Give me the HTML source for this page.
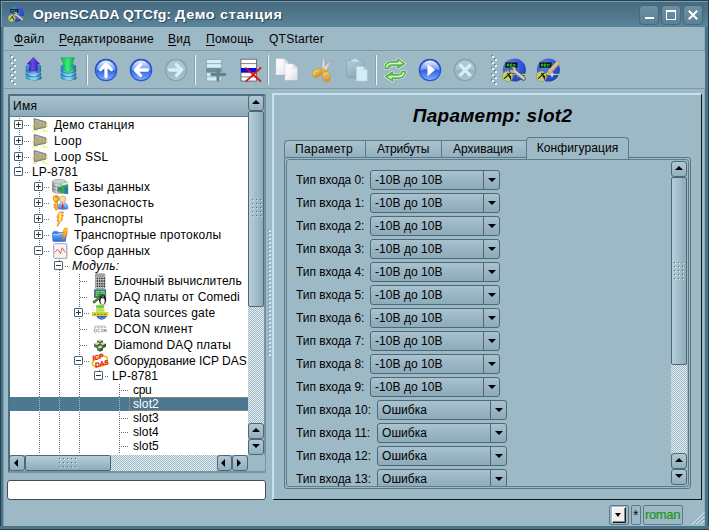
<!DOCTYPE html>
<html><head><meta charset="utf-8">
<style>
*{box-sizing:border-box;margin:0;padding:0}
html,body{width:709px;height:530px;overflow:hidden;background:#9eb9c6;font-family:"Liberation Sans",sans-serif;font-size:12px;color:#000}
.a{position:absolute}
#win{position:absolute;left:0;top:0;width:709px;height:530px;background:#9eb9c6;overflow:hidden}
/* window frame */
#frameL{left:0;top:27px;width:4px;height:503px;background:#4c7489;border-left:1px solid #24404f;border-right:1px solid #7a9eb1}
#frameR{left:704px;top:27px;width:5px;height:503px;background:#4c7489;border-right:1px solid #24404f;border-left:1px solid #88aabb}
#frameB{left:0;top:526px;width:709px;height:4px;background:#4c7489;border-bottom:1px solid #24404f}
#title{left:0;top:0;width:709px;height:27px;background:linear-gradient(#47697d 0,#4e748a 45%,#5b859c 100%);border-top:1px solid #24404f;border-left:1px solid #24404f;border-right:1px solid #24404f;box-shadow:inset 1px 1px 0 #789cb0}
#ttext{left:33px;top:7px;font-weight:bold;font-size:13.3px;color:#fff;white-space:nowrap;text-shadow:1px 1px 1px #2a4656}
.wbtn{top:5px;width:20px;height:20px;border-radius:4px;background:linear-gradient(#6d90a4,#5b8096);border:1px solid #44687c}
/* menu */
#menu{left:5px;top:27px;width:699px;height:23px;background:#9eb9c6}
.mi{top:32px;font-size:12px;white-space:nowrap;letter-spacing:.25px}
.mi u{text-decoration:underline;text-underline-offset:2px}
#tbar{left:4px;top:50px;width:701px;height:39px;border-top:1px solid #7d99a7;border-bottom:1px solid #7d99a7;background:#9eb9c6}
.tsep{top:55px;width:2px;height:30px;border-left:1px solid #86a2b0;border-right:1px solid #eef6fa}
/* tree */
#tree{left:8px;top:94px;width:258px;height:379px;border:2px solid;border-color:#4b7188 #7194a8 #7194a8 #4b7188;border-radius:2px;background:#fff;overflow:hidden}
#thead{left:0;top:0;width:238px;height:21px;background:linear-gradient(#a8c2ce,#9bb7c5 50%,#8daab8);border-bottom:1px solid #5f7b8a;font-size:12px;letter-spacing:.3px;padding:3px 0 0 3px}
.tr{left:0;width:239px;white-space:nowrap;font-size:12px}
.tx{position:absolute;top:50%;transform:translateY(-50%);letter-spacing:.3px}
.sel{background:#4c7991;color:#fff}
#ledit{left:7px;top:480px;width:259px;height:20px;border:1px solid #3d505c;border-radius:3px;background:#fff}
/* right panel */
#panel{left:272px;top:93px;width:430px;height:407px;border-top:2px solid #c6e1f0;border-left:2px solid #c6e1f0;border-right:1px solid #0e161c;border-bottom:1px solid #0e161c}
#ptitle{left:284px;top:104.5px;width:417px;letter-spacing:.27px;text-align:center;font-size:19px;font-weight:bold;font-style:italic}
.tab{top:140px;height:18px;border:1px solid #5f7b8a;border-bottom:none;border-radius:4px 4px 0 0;background:linear-gradient(#a9c2ce,#93afbd);font-size:12px;text-align:center;padding-top:1px;letter-spacing:.2px}
#pane{left:284px;top:157px;width:407px;height:332px;border:1px solid #587684;border-radius:3px}
.lbl{left:296px;font-size:12px;white-space:nowrap;letter-spacing:-.05px}
.cb{height:20px;width:130px;border:1px solid #4d6878;border-radius:3px;background:linear-gradient(#a9c3cf,#9ab5c3 50%,#8dabb9);font-size:12px;padding:2px 0 0 4px;letter-spacing:.05px;white-space:nowrap}
.cb i{position:absolute;right:15px;top:0;width:1px;height:18px;background:#4d6878}
.cb b{position:absolute;right:3px;top:7px;width:0;height:0;border:4px solid transparent;border-top:4px solid #000;border-bottom:none}
/* scrollbars */
.sb{background:#c9d8e0;background-image:conic-gradient(#9eb9c6 25%,#e6eef2 0 50%,#9eb9c6 0 75%,#e6eef2 0);background-size:2px 2px}
.sbtn{border:1px solid #4d6878;border-radius:3px;background:linear-gradient(#b0c8d3,#93afbd)}

.vl{width:1px;background-image:linear-gradient(#5f6f7c 50%,transparent 0);background-size:1px 2px}
.vl.f{background-position:0 1px}
.vl.w{background-image:linear-gradient(#a3bfce 50%,transparent 0)}
.hl.w{background-image:linear-gradient(90deg,#a3bfce 50%,transparent 0)}
.hl{height:1px;background-image:linear-gradient(90deg,#5f6f7c 50%,transparent 0);background-size:2px 1px}
.hl.f{background-position:1px 0}
.bx{width:9px;height:9px;border:1px solid #4c6272;border-radius:1px;background:#fff}
.bx:before{content:"";position:absolute;left:1px;top:3px;width:5px;height:1px;background:#2c3a46}
.bx s{position:absolute;left:3px;top:1px;width:1px;height:5px;background:#2c3a46}
.tt{white-space:nowrap;font-size:12px;letter-spacing:.1px}
.it{font-style:italic}
.gd2{width:2px;height:2px;background:#d9e9f1;box-shadow:-1px -1px 0 #86a2b0}
.gd{width:1px;height:1px;background:#54707e;box-shadow:1px 1px 0 #d4e6ee}
.ws{color:#fff}
.arr{position:absolute;width:0;height:0;border:4px solid transparent}
.au{border-bottom:4px solid #000;border-top:none}
.ad{border-top:4px solid #000;border-bottom:none}
.al{border-right:4px solid #000;border-left:none}
.ar{border-left:4px solid #000;border-right:none}
.sl{border:1px solid #4d6878;border-radius:2px}
.slv{background:linear-gradient(90deg,#b7cfda,#a3bdca 50%,#8eabb9)}
.slh{background:linear-gradient(#b7cfda,#a3bdca 50%,#8eabb9)}
.st{top:505px;height:20px;border:1px solid #5e7a88;border-radius:2px;font-size:13px}
/* status */
#status{left:5px;top:500px;width:699px;height:25px}
</style></head><body>
<div id="win">
<div id="title" class="a"></div>
<div id="ttext" class="a"><span id="t1" style="position:absolute;left:0;top:0;transform-origin:0 50%;transform:scaleX(1.052);letter-spacing:.12px">OpenSCADA QTCfg:</span><span id="t2" style="position:absolute;left:141.5px;top:0;transform-origin:0 50%;transform:scaleX(1.088);letter-spacing:.6px">Демо станция</span></div>
<div class="a wbtn" style="left:639px"><i class="a" style="left:5px;top:11px;width:9px;height:2px;background:#fff"></i></div>
<div class="a wbtn" style="left:661px"><i class="a" style="left:4px;top:4px;width:10px;height:10px;border:1px solid #fff;border-top-width:2px"></i></div>
<div class="a wbtn" style="left:683px"><svg class="a" style="left:0;top:0" width="19" height="19" viewBox="0 0 19 19"><path d="M4.8 4.8L13.2 13.2M13.2 4.8L4.8 13.2" stroke="#fff" stroke-width="2" fill="none"/></svg></div>
<div class="a" style="left:8px;top:6px;width:16px;height:16px"><svg width="16" height="16" viewBox="0 0 24 24" style="display:block;overflow:visible"><defs><radialGradient id="tb" cx=".35" cy=".3" r=".8"><stop offset="0" stop-color="#6a8cf0"/><stop offset=".55" stop-color="#3058d8"/><stop offset="1" stop-color="#1c3cb8"/></radialGradient></defs>
<circle cx="12.4" cy="12" r="11.5" fill="url(#tb)"/>
<rect x="3.6" y="4.6" width="11.8" height="5" fill="#0a1408" stroke="#1c2c1c" stroke-width=".4"/>
<path d="M5.4 6V8.4M6.8 6V8.4M5.4 6H6.8M5.4 7.2H6.8M8.4 6H9.8V8.4H8.4ZM11 6.2L12.6 7.2L11 8.4M13 6V8.4" stroke="#2ee62e" stroke-width=".8" fill="none"/>
<path d="M9 16.4H23.4" stroke="#e8e020" stroke-width="1"/>
<path d="M13 16.4L15 15.2L16 12.6L17 15.4L19 16.4L17 17.4L16 20L15 17.6Z" fill="#dfe8f4" opacity=".9"/>
<circle cx="5.6" cy="18.2" r="5.3" fill="#c4cf6a" stroke="#8a9430" stroke-width=".6"/>
<path d="M2.2 20.6L8.6 14.6M5.2 15.2L9.2 19.4M6.8 17.6 L9 21.6" stroke="#151515" stroke-width="1.1" fill="none"/>
<g><path d="M12.4 13.2L21.6 20.4" stroke="#4c4c4c" stroke-width="4.4" stroke-linecap="round"/><circle cx="10.9" cy="11.9" r="3.7" fill="#4c4c4c"/>
<path d="M12.4 13.2L21.6 20.4" stroke="#b9b9b9" stroke-width="3" stroke-linecap="round"/><circle cx="10.9" cy="11.9" r="3" fill="#b9b9b9"/>
<path d="M13 13L21.8 19.8" stroke="#e6e6e6" stroke-width=".9" stroke-linecap="round"/>
<path d="M10.9 12.2L7.2 11.2L9.6 8.2Z" fill="#3b63da" stroke="#4c4c4c" stroke-width=".5"/></g></svg></div>
<div id="frameL" class="a"></div><div id="frameR" class="a"></div><div id="frameB" class="a"></div>

<div id="menu" class="a"></div>
<div class="a mi" style="left:14px"><u>Ф</u>айл</div>
<div class="a mi" style="left:59px"><u>Р</u>едактирование</div>
<div class="a mi" style="left:168px"><u>В</u>ид</div>
<div class="a mi" style="left:206px"><u>П</u>омощь</div>
<div class="a mi" style="left:269px">QTStarter</div>
<div id="tbar" class="a"></div>
<div class="a tsep" style="left:86px"></div>
<div class="a tsep" style="left:194px"></div>
<div class="a tsep" style="left:267px"></div>
<div class="a tsep" style="left:375px"></div>
<div class="a" style="left:21px;top:58px;width:24px;height:24px"><svg width="24" height="24" viewBox="0 0 24 24" style="display:block;overflow:visible"><defs><linearGradient id="lc" x1="0" x2="1"><stop offset="0" stop-color="#1d74b4"/><stop offset=".35" stop-color="#6cc6f0"/><stop offset=".6" stop-color="#8bd8f8"/><stop offset="1" stop-color="#1a5f96"/></linearGradient>
<linearGradient id="lt" x1="0" x2="1"><stop offset="0" stop-color="#3a94cc"/><stop offset=".5" stop-color="#55b0e0"/><stop offset="1" stop-color="#2a78b0"/></linearGradient></defs>
<ellipse cx="13.6" cy="20" rx="7.6" ry="2.6" fill="#27414f" opacity=".55"/>
<path d="M4.8 8.5 V19.6 A7.6 2.6 0 0 0 20 19.6 V8.5 Z" fill="url(#lc)"/>
<path d="M4.8 12.6 A7.6 2.6 0 0 0 20 12.6" fill="none" stroke="#1b67a3" stroke-width=".9" opacity=".9"/>
<path d="M4.8 16.4 A7.6 2.6 0 0 0 20 16.4" fill="none" stroke="#1b67a3" stroke-width=".9" opacity=".9"/>
<path d="M4.8 13.5 A7.6 2.6 0 0 0 20 13.5" fill="none" stroke="#b5eaff" stroke-width=".7" opacity=".7"/>
<path d="M4.8 17.3 A7.6 2.6 0 0 0 20 17.3" fill="none" stroke="#b5eaff" stroke-width=".7" opacity=".7"/>
<ellipse cx="12.4" cy="8.5" rx="7.6" ry="2.6" fill="url(#lt)" stroke="#2a7ab5" stroke-width=".5"/><defs><linearGradient id="lp" x1="0" x2="1"><stop offset="0" stop-color="#3d14b8"/><stop offset=".45" stop-color="#6a48e8"/><stop offset="1" stop-color="#3a10b0"/></linearGradient></defs>
<path d="M12.4 -0.6 L18.6 5.9 L16 5.9 L16.6 13.2 L7.8 13.2 L9 5.9 L6.2 5.9 Z" fill="url(#lp)" stroke="#3a12a8" stroke-width=".5" stroke-linejoin="round"/></svg></div>
<div class="a" style="left:56px;top:58px;width:24px;height:24px"><svg width="24" height="24" viewBox="0 0 24 24" style="display:block;overflow:visible"><defs><linearGradient id="sc" x1="0" x2="1"><stop offset="0" stop-color="#1d74b4"/><stop offset=".35" stop-color="#6cc6f0"/><stop offset=".6" stop-color="#8bd8f8"/><stop offset="1" stop-color="#1a5f96"/></linearGradient>
<linearGradient id="st" x1="0" x2="1"><stop offset="0" stop-color="#3a94cc"/><stop offset=".5" stop-color="#55b0e0"/><stop offset="1" stop-color="#2a78b0"/></linearGradient></defs>
<ellipse cx="13.6" cy="20" rx="7.6" ry="2.6" fill="#27414f" opacity=".55"/>
<path d="M4.8 8.5 V19.6 A7.6 2.6 0 0 0 20 19.6 V8.5 Z" fill="url(#sc)"/>
<path d="M4.8 12.6 A7.6 2.6 0 0 0 20 12.6" fill="none" stroke="#1b67a3" stroke-width=".9" opacity=".9"/>
<path d="M4.8 16.4 A7.6 2.6 0 0 0 20 16.4" fill="none" stroke="#1b67a3" stroke-width=".9" opacity=".9"/>
<path d="M4.8 13.5 A7.6 2.6 0 0 0 20 13.5" fill="none" stroke="#b5eaff" stroke-width=".7" opacity=".7"/>
<path d="M4.8 17.3 A7.6 2.6 0 0 0 20 17.3" fill="none" stroke="#b5eaff" stroke-width=".7" opacity=".7"/>
<ellipse cx="12.4" cy="8.5" rx="7.6" ry="2.6" fill="url(#st)" stroke="#2a7ab5" stroke-width=".5"/><defs><linearGradient id="sg" x1="0" x2="1"><stop offset="0" stop-color="#10b850"/><stop offset=".5" stop-color="#38ec80"/><stop offset="1" stop-color="#0ea848"/></linearGradient></defs>
<path d="M5 -0.2 L18.3 -0.2 L15.4 8.2 L18.4 8.2 L12.3 16.2 L6 8.2 L8.6 8.2 Z" fill="url(#sg)" stroke="#0c9a40" stroke-width=".5" stroke-linejoin="round"/></svg></div>
<div class="a" style="left:94px;top:58px;width:24px;height:24px"><svg width="24" height="24" viewBox="0 0 24 24" style="display:block;overflow:visible"><defs><linearGradient id="ub" x1="0" y1="0" x2="0" y2="1"><stop offset="0" stop-color="#2f62e2"/><stop offset=".5" stop-color="#2a5ee4"/><stop offset="1" stop-color="#86b2ff"/></linearGradient>
<linearGradient id="ug" x1="0" y1="0" x2="0" y2="1"><stop offset="0" stop-color="#fff" stop-opacity=".92"/><stop offset="1" stop-color="#fff" stop-opacity=".28"/></linearGradient></defs>
<circle cx="12" cy="12" r="10.7" fill="url(#ub)" stroke="#2452cc" stroke-width="1.1"/>
<path d="M2.4 12.4 A9.6 9.8 0 0 1 21.6 12.4 Q17 11 12 11.2 Q7 11 2.4 12.4Z" fill="url(#ug)"/><path d="M12 18.5V6.5M6.6 11.6L12 6.2L17.4 11.6" fill="none" stroke="#fff" stroke-width="3.3" stroke-linecap="round" stroke-linejoin="round"/></svg></div>
<div class="a" style="left:129px;top:58px;width:24px;height:24px"><svg width="24" height="24" viewBox="0 0 24 24" style="display:block;overflow:visible"><defs><linearGradient id="kb" x1="0" y1="0" x2="0" y2="1"><stop offset="0" stop-color="#2f62e2"/><stop offset=".5" stop-color="#2a5ee4"/><stop offset="1" stop-color="#86b2ff"/></linearGradient>
<linearGradient id="kg" x1="0" y1="0" x2="0" y2="1"><stop offset="0" stop-color="#fff" stop-opacity=".92"/><stop offset="1" stop-color="#fff" stop-opacity=".28"/></linearGradient></defs>
<circle cx="12" cy="12" r="10.7" fill="url(#kb)" stroke="#2452cc" stroke-width="1.1"/>
<path d="M2.4 12.4 A9.6 9.8 0 0 1 21.6 12.4 Q17 11 12 11.2 Q7 11 2.4 12.4Z" fill="url(#kg)"/><path d="M18.5 12H6.5M11.6 6.6L6.2 12L11.6 17.4" fill="none" stroke="#fff" stroke-width="3.3" stroke-linecap="round" stroke-linejoin="round"/></svg></div>
<div class="a" style="left:164px;top:58px;width:24px;height:24px"><svg width="24" height="24" viewBox="0 0 24 24" style="display:block;overflow:visible"><defs><linearGradient id="fb" x1="0" y1="0" x2="0" y2="1"><stop offset="0" stop-color="#9db5c1"/><stop offset=".5" stop-color="#98b0bd"/><stop offset="1" stop-color="#b0c6d1"/></linearGradient></defs>
<circle cx="12" cy="12" r="10.7" fill="url(#fb)" stroke="#849fad" stroke-width="1.1"/>
<path d="M2.4 12.4 A9.6 9.8 0 0 1 21.6 12.4 Q17 11 12 11.2 Q7 11 2.4 12.4Z" fill="#cfe0e8" opacity=".45"/><path d="M5.5 12H17.5M12.4 6.6L17.8 12L12.4 17.4" fill="none" stroke="#d6f0fb" stroke-width="3.3" stroke-linecap="round" stroke-linejoin="round"/></svg></div>
<div class="a" style="left:202px;top:58px;width:24px;height:24px"><svg width="24" height="24" viewBox="0 0 24 24" style="display:block;overflow:visible"><rect x="4.4" y="1.4" width="15" height="21.6" fill="#d3ecf7" stroke="#8eaab8" stroke-width=".9"/>
<path d="M4.4 5.6H19.4M4.4 14.6H19.4M4.4 18.8H19.4" stroke="#8eaab8" stroke-width=".9"/>
<rect x="4.4" y="9.8" width="15" height="4.6" fill="#6e8d9b"/>
<path d="M8.6 16.5H24M16 11.4V23.2" stroke="#64838f" stroke-width="3" fill="none"/></svg></div>
<div class="a" style="left:238px;top:58px;width:24px;height:24px"><svg width="24" height="24" viewBox="0 0 24 24" style="display:block;overflow:visible"><rect x="3" y="1.2" width="15.4" height="21.8" fill="#fff" stroke="#4a4a4a" stroke-width=".7"/>
<path d="M3 5.6H18.4M3 14.6H18.4M3 18.9H18.4" stroke="#4a4a4a" stroke-width=".7"/>
<rect x="3" y="10" width="15.4" height="4.4" fill="#0a0ae6"/>
<path d="M8 10.2L22.4 23M22.6 10L8.2 23.2" stroke="#e01010" stroke-width="1.8" fill="none" stroke-linecap="round"/></svg></div>
<div class="a" style="left:275px;top:58px;width:24px;height:24px"><svg width="24" height="24" viewBox="0 0 24 24" style="display:block;overflow:visible"><defs><linearGradient id="cpg" x1="0" y1="0" x2="1" y2="1"><stop offset="0" stop-color="#ffffff"/><stop offset=".5" stop-color="#f4f4f8"/><stop offset="1" stop-color="#d8d9e2"/></linearGradient></defs>
<path d="M1 .8H9.4L13.4 4.8V17H1Z" fill="#5f7886" opacity=".3" transform="translate(.7 .8)"/>
<path d="M1 .8H9.4L13.4 4.8V17H1Z" fill="url(#cpg)" stroke="#d0d4dc" stroke-width=".4"/>
<path d="M9.4 .8V4.8H13.4Z" fill="#e4e5ec" stroke="#b8bcc6" stroke-width=".4"/>
<path d="M10 6H18.4L22.5 10V22.3H10Z" fill="#5f7886" opacity=".3" transform="translate(.7 .8)"/>
<path d="M10 6H18.4L22.5 10V22.3H10Z" fill="url(#cpg)" stroke="#d0d4dc" stroke-width=".4"/>
<path d="M18.4 6V10H22.5Z" fill="#e4e5ec" stroke="#b8bcc6" stroke-width=".4"/></svg></div>
<div class="a" style="left:310px;top:58px;width:24px;height:24px"><svg width="24" height="24" viewBox="0 0 24 24" style="display:block;overflow:visible"><defs><linearGradient id="ctb" x1="0" x2="1"><stop offset="0" stop-color="#ffffff"/><stop offset="1" stop-color="#a4acb6"/></linearGradient>
<linearGradient id="cth" x1="0" y1="0" x2="0" y2="1"><stop offset="0" stop-color="#ffd42c"/><stop offset="1" stop-color="#f08c10"/></linearGradient></defs>
<path d="M12.6 0.2 L14.6 0.6 L16 11.4 L12.2 12.6 Z" fill="url(#ctb)" stroke="#9098a4" stroke-width=".5"/>
<path d="M22.2 3.4 L20.6 2 L12.2 11.4 L15.2 13.8 Z" fill="url(#ctb)" stroke="#9098a4" stroke-width=".5"/>
<ellipse cx="6.9" cy="15.2" rx="3.6" ry="2.4" fill="none" stroke="url(#cth)" stroke-width="2.4" transform="rotate(-32 6.9 15.2)"/>
<ellipse cx="16.3" cy="18.6" rx="2.5" ry="4" fill="none" stroke="url(#cth)" stroke-width="2.4" transform="rotate(-14 16.3 18.6)"/>
<path d="M10 12.6 L13.4 11.4 L15.4 13 L15.4 14.6" fill="none" stroke="#f4a818" stroke-width="2.4" stroke-linejoin="round"/>
<ellipse cx="6.9" cy="15.2" rx="5" ry="3.8" fill="none" stroke="#d87c0c" stroke-width=".4" transform="rotate(-32 6.9 15.2)"/>
<ellipse cx="16.3" cy="18.6" rx="3.9" ry="5.4" fill="none" stroke="#d87c0c" stroke-width=".4" transform="rotate(-14 16.3 18.6)"/></svg></div>
<div class="a" style="left:345px;top:58px;width:24px;height:24px"><svg width="24" height="24" viewBox="0 0 24 24" style="display:block;overflow:visible"><defs><linearGradient id="psg" x1="0" y1="0" x2=".6" y2="1"><stop offset="0" stop-color="#b6d2de"/><stop offset="1" stop-color="#86a4b2"/></linearGradient></defs>
<rect x="1.8" y="2.6" width="17.4" height="17.2" rx="1.8" fill="url(#psg)" stroke="#819eac" stroke-width=".6"/>
<path d="M5.4 4.6 V3 Q5.6 2 7 1.8 Q7.6 0.2 10 0.2 Q12.4 0.2 13 1.8 Q14.4 2 14.6 3 V4.6Z" fill="#c2dce8" stroke="#8aa8b6" stroke-width=".5"/>
<path d="M11.4 8.4H18.4L22.2 12.2V23H11.4Z" fill="#d2ecf8" stroke="#b4d2e0" stroke-width=".5"/>
<path d="M18.4 8.4V12.2H22.2Z" fill="#b8d6e4"/></svg></div>
<div class="a" style="left:383px;top:58px;width:24px;height:24px"><svg width="24" height="24" viewBox="0 0 24 24" style="display:block;overflow:visible"><g fill="#58bd48" stroke="#f4fff0" stroke-width="1.8" stroke-linejoin="round" paint-order="stroke">
<path d="M1.6 10.6 Q1.6 3.4 9 3.6 L14.6 3.6 L14.6 0.6 L22 5.6 L14.6 10.4 L14.6 7.6 L9.4 7.6 Q6 7.6 5.6 11 Z"/>
<path d="M22.6 13.2 Q22.6 20.4 15.2 20.4 L9.6 20.4 L9.6 23.4 L2.2 18.4 L9.6 13.6 L9.6 16.4 L14.8 16.4 Q18.2 16.4 18.6 13.2 Z"/></g>
<g fill="none" stroke="#2c8428" stroke-width=".6" stroke-linejoin="round">
<path d="M1.6 10.6 Q1.6 3.4 9 3.6 L14.6 3.6 L14.6 0.6 L22 5.6 L14.6 10.4 L14.6 7.6 L9.4 7.6 Q6 7.6 5.6 11 Z"/>
<path d="M22.6 13.2 Q22.6 20.4 15.2 20.4 L9.6 20.4 L9.6 23.4 L2.2 18.4 L9.6 13.6 L9.6 16.4 L14.8 16.4 Q18.2 16.4 18.6 13.2 Z"/></g>
<path d="M3.6 9.6 Q4 5.6 9 5.6 L16.4 5.6 L16.4 4 L19 5.6" fill="none" stroke="#d8f8cc" stroke-width="1.5"/>
<path d="M20.6 14.4 Q20.2 18.4 15.2 18.4 L7.8 18.4 L7.8 20 L5.2 18.4" fill="none" stroke="#d8f8cc" stroke-width="1.5"/></svg></div>
<div class="a" style="left:418px;top:58px;width:24px;height:24px"><svg width="24" height="24" viewBox="0 0 24 24" style="display:block;overflow:visible"><defs><linearGradient id="pb" x1="0" y1="0" x2="0" y2="1"><stop offset="0" stop-color="#2f62e2"/><stop offset=".5" stop-color="#2a5ee4"/><stop offset="1" stop-color="#86b2ff"/></linearGradient>
<linearGradient id="pg" x1="0" y1="0" x2="0" y2="1"><stop offset="0" stop-color="#fff" stop-opacity=".92"/><stop offset="1" stop-color="#fff" stop-opacity=".28"/></linearGradient></defs>
<circle cx="12" cy="12" r="10.7" fill="url(#pb)" stroke="#2452cc" stroke-width="1.1"/>
<path d="M2.4 12.4 A9.6 9.8 0 0 1 21.6 12.4 Q17 11 12 11.2 Q7 11 2.4 12.4Z" fill="url(#pg)"/><path d="M9.8 6.4L16.6 12L9.8 17.8Z" fill="#fff" stroke="#fff" stroke-width=".6" stroke-linejoin="round"/></svg></div>
<div class="a" style="left:453px;top:58px;width:24px;height:24px"><svg width="24" height="24" viewBox="0 0 24 24" style="display:block;overflow:visible"><defs><linearGradient id="xb" x1="0" y1="0" x2="0" y2="1"><stop offset="0" stop-color="#9db5c1"/><stop offset=".5" stop-color="#98b0bd"/><stop offset="1" stop-color="#b0c6d1"/></linearGradient></defs>
<circle cx="12" cy="12" r="10.7" fill="url(#xb)" stroke="#849fad" stroke-width="1.1"/>
<path d="M2.4 12.4 A9.6 9.8 0 0 1 21.6 12.4 Q17 11 12 11.2 Q7 11 2.4 12.4Z" fill="#cfe0e8" opacity=".45"/><path d="M6.6 6.4L17.6 17.8M17.6 6.4L6.6 17.8" fill="none" stroke="#d6f0fb" stroke-width="3.3" stroke-linecap="butt"/></svg></div>
<div class="a" style="left:502px;top:58px;width:24px;height:24px"><svg width="24" height="24" viewBox="0 0 24 24" style="display:block;overflow:visible"><defs><radialGradient id="cb" cx=".35" cy=".3" r=".8"><stop offset="0" stop-color="#6a8cf0"/><stop offset=".55" stop-color="#3058d8"/><stop offset="1" stop-color="#1c3cb8"/></radialGradient></defs>
<circle cx="12.4" cy="12" r="11.5" fill="url(#cb)"/>
<rect x="3.6" y="4.6" width="11.8" height="5" fill="#0a1408" stroke="#1c2c1c" stroke-width=".4"/>
<path d="M5.4 6V8.4M6.8 6V8.4M5.4 6H6.8M5.4 7.2H6.8M8.4 6H9.8V8.4H8.4ZM11 6.2L12.6 7.2L11 8.4M13 6V8.4" stroke="#2ee62e" stroke-width=".8" fill="none"/>
<path d="M9 16.4H23.4" stroke="#e8e020" stroke-width="1"/>
<path d="M13 16.4L15 15.2L16 12.6L17 15.4L19 16.4L17 17.4L16 20L15 17.6Z" fill="#dfe8f4" opacity=".9"/>
<circle cx="5.6" cy="18.2" r="5.3" fill="#c4cf6a" stroke="#8a9430" stroke-width=".6"/>
<path d="M2.2 20.6L8.6 14.6M5.2 15.2L9.2 19.4M6.8 17.6 L9 21.6" stroke="#151515" stroke-width="1.1" fill="none"/>
<g><path d="M12.4 13.2L21.6 20.4" stroke="#4c4c4c" stroke-width="4.4" stroke-linecap="round"/><circle cx="10.9" cy="11.9" r="3.7" fill="#4c4c4c"/>
<path d="M12.4 13.2L21.6 20.4" stroke="#b9b9b9" stroke-width="3" stroke-linecap="round"/><circle cx="10.9" cy="11.9" r="3" fill="#b9b9b9"/>
<path d="M13 13L21.8 19.8" stroke="#e6e6e6" stroke-width=".9" stroke-linecap="round"/>
<path d="M10.9 12.2L7.2 11.2L9.6 8.2Z" fill="#3b63da" stroke="#4c4c4c" stroke-width=".5"/></g></svg></div>
<div class="a" style="left:536px;top:58px;width:24px;height:24px"><svg width="24" height="24" viewBox="0 0 24 24" style="display:block;overflow:visible"><defs><radialGradient id="vb" cx=".35" cy=".3" r=".8"><stop offset="0" stop-color="#6a8cf0"/><stop offset=".55" stop-color="#3058d8"/><stop offset="1" stop-color="#1c3cb8"/></radialGradient></defs>
<circle cx="12.4" cy="12" r="11.5" fill="url(#vb)"/>
<rect x="3.6" y="4.6" width="11.8" height="5" fill="#0a1408" stroke="#1c2c1c" stroke-width=".4"/>
<path d="M5.4 6V8.4M6.8 6V8.4M5.4 6H6.8M5.4 7.2H6.8M8.4 6H9.8V8.4H8.4ZM11 6.2L12.6 7.2L11 8.4M13 6V8.4" stroke="#2ee62e" stroke-width=".8" fill="none"/>
<path d="M9 16.4H23.4" stroke="#e8e020" stroke-width="1"/>
<path d="M13 16.4L15 15.2L16 12.6L17 15.4L19 16.4L17 17.4L16 20L15 17.6Z" fill="#dfe8f4" opacity=".9"/>
<circle cx="5.6" cy="18.2" r="5.3" fill="#c4cf6a" stroke="#8a9430" stroke-width=".6"/>
<path d="M2.2 20.6L8.6 14.6M5.2 15.2L9.2 19.4M6.8 17.6 L9 21.6" stroke="#151515" stroke-width="1.1" fill="none"/>
<g><path d="M11 14.2 L20.8 3 L24 5.6 L13.6 16.6 Z" fill="#d9b384" stroke="#a07a4c" stroke-width=".5"/><path d="M11 14.2 L9.6 17.6 L13.6 16.6 Z" fill="#d8e060"/><path d="M9.6 17.6 L10.3 15.9 L11.6 17.1Z" fill="#404020"/><path d="M12.2 13 L22 3.8" stroke="#efd2aa" stroke-width=".9"/></g></svg></div>
<svg class="a" style="left:0;top:0" width="709" height="100" viewBox="0 0 709 100"><rect x="10" y="55" width="2" height="2" fill="#6d8a99"/><rect x="11" y="56" width="2" height="2" fill="#eaf2f6"/><rect x="13" y="58" width="2" height="2" fill="#6d8a99"/><rect x="14" y="59" width="2" height="2" fill="#eaf2f6"/><rect x="10" y="61" width="2" height="2" fill="#6d8a99"/><rect x="11" y="62" width="2" height="2" fill="#eaf2f6"/><rect x="13" y="64" width="2" height="2" fill="#6d8a99"/><rect x="14" y="65" width="2" height="2" fill="#eaf2f6"/><rect x="10" y="67" width="2" height="2" fill="#6d8a99"/><rect x="11" y="68" width="2" height="2" fill="#eaf2f6"/><rect x="13" y="70" width="2" height="2" fill="#6d8a99"/><rect x="14" y="71" width="2" height="2" fill="#eaf2f6"/><rect x="10" y="73" width="2" height="2" fill="#6d8a99"/><rect x="11" y="74" width="2" height="2" fill="#eaf2f6"/><rect x="13" y="76" width="2" height="2" fill="#6d8a99"/><rect x="14" y="77" width="2" height="2" fill="#eaf2f6"/><rect x="10" y="79" width="2" height="2" fill="#6d8a99"/><rect x="11" y="80" width="2" height="2" fill="#eaf2f6"/><rect x="13" y="82" width="2" height="2" fill="#6d8a99"/><rect x="14" y="83" width="2" height="2" fill="#eaf2f6"/></svg>
<svg class="a" style="left:0;top:0" width="709" height="100" viewBox="0 0 709 100"><rect x="491" y="55" width="2" height="2" fill="#6d8a99"/><rect x="492" y="56" width="2" height="2" fill="#eaf2f6"/><rect x="494" y="58" width="2" height="2" fill="#6d8a99"/><rect x="495" y="59" width="2" height="2" fill="#eaf2f6"/><rect x="491" y="61" width="2" height="2" fill="#6d8a99"/><rect x="492" y="62" width="2" height="2" fill="#eaf2f6"/><rect x="494" y="64" width="2" height="2" fill="#6d8a99"/><rect x="495" y="65" width="2" height="2" fill="#eaf2f6"/><rect x="491" y="67" width="2" height="2" fill="#6d8a99"/><rect x="492" y="68" width="2" height="2" fill="#eaf2f6"/><rect x="494" y="70" width="2" height="2" fill="#6d8a99"/><rect x="495" y="71" width="2" height="2" fill="#eaf2f6"/><rect x="491" y="73" width="2" height="2" fill="#6d8a99"/><rect x="492" y="74" width="2" height="2" fill="#eaf2f6"/><rect x="494" y="76" width="2" height="2" fill="#6d8a99"/><rect x="495" y="77" width="2" height="2" fill="#eaf2f6"/><rect x="491" y="79" width="2" height="2" fill="#6d8a99"/><rect x="492" y="80" width="2" height="2" fill="#eaf2f6"/><rect x="494" y="82" width="2" height="2" fill="#6d8a99"/><rect x="495" y="83" width="2" height="2" fill="#eaf2f6"/></svg>

<div id="tree" class="a">
<div id="thead" class="a">Имя</div>
<div class="a sel" style="left:0;top:301px;width:238px;height:14px"></div>
<div class="a vl f" style="left:9px;top:21px;height:55px"></div>
<div class="a vl f" style="left:29px;top:83px;height:275px"></div>
<div class="a vl f" style="left:49px;top:163px;height:195px"></div>
<div class="a vl f" style="left:69px;top:177px;height:181px"></div>
<div class="a vl f" style="left:89px;top:273px;height:3px"></div>
<div class="a vl f" style="left:109px;top:287px;height:71px"></div>
<div class="a hl" style="left:14px;top:29px;width:5px"></div>
<div class="a bx" style="left:4px;top:24px"><s></s></div>
<div class="a" style="left:22px;top:21px;width:16px;height:16px"><svg width="16" height="16" viewBox="0 0 16 16" style="display:block;overflow:visible"><path d="M2.2 1.6 L13.8 4.9 L13.8 10.1 L2.2 12.8 Z" fill="#a0a0a0" stroke="#6c6c6c" stroke-width=".9" stroke-linejoin="round"/>
<path d="M3 2.8 L13 5.6 L13 6.6 L3 5Z" fill="#b8b8b8" opacity=".7"/>
<g fill="none" stroke="#d2c22c" stroke-width=".6" stroke-linecap="round">
<path d="M.9 9.6L2.7 6.1L3.5 9.6M1.6 8.4H3.2M4.7 9.6L5.3 6.2H7.2L6.6 9.6M8 9.6L8.7 6.2H9.9Q10.7 6.4 10.4 7.3Q10 8 8.5 7.9M11.4 7.9Q11.6 6.1 12.6 6.2Q13.4 6.4 13.1 8Q12.8 9.6 11.9 9.5Q11.2 9.4 11.4 7.9M15.7 6.6Q15 6 14.4 6.6Q13.7 7.6 13.9 8.8Q14.2 9.8 15.3 9.2"/></g>
<path d="M0.2 14.2H4.6V12.9M11.6 11V14.2H15.4" fill="none" stroke="#ecec28" stroke-width=".9"/></svg></div>
<div class="a tt" style="left:44px;top:21px;height:16px;line-height:16px;letter-spacing:0.218px">Демо станция</div>
<div class="a hl" style="left:14px;top:45px;width:5px"></div>
<div class="a bx" style="left:4px;top:40px"><s></s></div>
<div class="a" style="left:22px;top:37px;width:16px;height:16px"><svg width="16" height="16" viewBox="0 0 16 16" style="display:block;overflow:visible"><path d="M2.2 1.6 L13.8 4.9 L13.8 10.1 L2.2 12.8 Z" fill="#a0a0a0" stroke="#6c6c6c" stroke-width=".9" stroke-linejoin="round"/>
<path d="M3 2.8 L13 5.6 L13 6.6 L3 5Z" fill="#b8b8b8" opacity=".7"/>
<g fill="none" stroke="#d2c22c" stroke-width=".6" stroke-linecap="round">
<path d="M.9 9.6L2.7 6.1L3.5 9.6M1.6 8.4H3.2M4.7 9.6L5.3 6.2H7.2L6.6 9.6M8 9.6L8.7 6.2H9.9Q10.7 6.4 10.4 7.3Q10 8 8.5 7.9M11.4 7.9Q11.6 6.1 12.6 6.2Q13.4 6.4 13.1 8Q12.8 9.6 11.9 9.5Q11.2 9.4 11.4 7.9M15.7 6.6Q15 6 14.4 6.6Q13.7 7.6 13.9 8.8Q14.2 9.8 15.3 9.2"/></g>
<path d="M0.2 14.2H4.6V12.9M11.6 11V14.2H15.4" fill="none" stroke="#ecec28" stroke-width=".9"/></svg></div>
<div class="a tt" style="left:44px;top:37px;height:16px;line-height:16px;letter-spacing:0.297px">Loop</div>
<div class="a hl" style="left:14px;top:61px;width:5px"></div>
<div class="a bx" style="left:4px;top:56px"><s></s></div>
<div class="a" style="left:22px;top:53px;width:16px;height:16px"><svg width="16" height="16" viewBox="0 0 16 16" style="display:block;overflow:visible"><path d="M2.2 1.6 L13.8 4.9 L13.8 10.1 L2.2 12.8 Z" fill="#a0a0a0" stroke="#6c6c6c" stroke-width=".9" stroke-linejoin="round"/>
<path d="M3 2.8 L13 5.6 L13 6.6 L3 5Z" fill="#b8b8b8" opacity=".7"/>
<g fill="none" stroke="#d2c22c" stroke-width=".6" stroke-linecap="round">
<path d="M.9 9.6L2.7 6.1L3.5 9.6M1.6 8.4H3.2M4.7 9.6L5.3 6.2H7.2L6.6 9.6M8 9.6L8.7 6.2H9.9Q10.7 6.4 10.4 7.3Q10 8 8.5 7.9M11.4 7.9Q11.6 6.1 12.6 6.2Q13.4 6.4 13.1 8Q12.8 9.6 11.9 9.5Q11.2 9.4 11.4 7.9M15.7 6.6Q15 6 14.4 6.6Q13.7 7.6 13.9 8.8Q14.2 9.8 15.3 9.2"/></g>
<path d="M0.2 14.2H4.6V12.9M11.6 11V14.2H15.4" fill="none" stroke="#ecec28" stroke-width=".9"/></svg></div>
<div class="a tt" style="left:44px;top:53px;height:16px;line-height:16px;letter-spacing:0.198px">Loop SSL</div>
<div class="a hl f" style="left:14px;top:76px;width:5px"></div>
<div class="a bx" style="left:4px;top:71px"></div>
<div class="a tt" style="left:22px;top:69px;height:14px;line-height:14px;letter-spacing:0.1px">LP-8781</div>
<div class="a hl" style="left:34px;top:91px;width:5px"></div>
<div class="a bx" style="left:24px;top:86px"><s></s></div>
<div class="a" style="left:42px;top:83px;width:16px;height:16px"><svg width="16" height="16" viewBox="0 0 16 16" style="display:block;overflow:visible"><defs><linearGradient id="dbs" x1="0" x2="1"><stop offset="0" stop-color="#8a8a8a"/><stop offset=".35" stop-color="#ececec"/><stop offset="1" stop-color="#8c8c8c"/></linearGradient></defs>
<path d="M0.4 2.6 V12 A6.8 2.4 0 0 0 14 12 V2.6Z" fill="url(#dbs)" stroke="#7c7c7c" stroke-width=".5"/>
<path d="M0.4 5.8A6.8 2.4 0 0 0 14 5.8M0.4 9A6.8 2.4 0 0 0 14 9" fill="none" stroke="#707070" stroke-width=".7"/>
<ellipse cx="7.2" cy="2.6" rx="6.8" ry="2.3" fill="#d0d0d0" stroke="#8c8c8c" stroke-width=".5"/>
<path d="M5.6 6.4L11.6 5.2V14L5.6 13.2Z" fill="#46a84a" stroke="#2c7c34" stroke-width=".3"/>
<path d="M5.6 6.4L11.6 5.2V6.8L5.6 7.8Z" fill="#d4ecf8"/>
<path d="M5.8 9.4L11.4 8.6V10.6L5.8 11.2Z" fill="#3a6ccc"/>
<path d="M9.6 4.4L16 3V15L9.6 14Z" fill="#44a450" stroke="#2c7c34" stroke-width=".3"/>
<path d="M9.6 4.4L16 3V5.2L9.6 6.4Z" fill="#d8eef8"/>
<path d="M12.4 8.2L16 7.6V14.8L12.4 14.4Z" fill="#2a78a8"/></svg></div>
<div class="a tt" style="left:64px;top:83px;height:16px;line-height:16px;letter-spacing:0.257px">Базы данных</div>
<div class="a hl" style="left:34px;top:107px;width:5px"></div>
<div class="a bx" style="left:24px;top:102px"><s></s></div>
<div class="a" style="left:42px;top:99px;width:16px;height:16px"><svg width="16" height="16" viewBox="0 0 16 16" style="display:block;overflow:visible"><defs><linearGradient id="sbd" x1="0" y1="0" x2="0" y2="1"><stop offset="0" stop-color="#b4d6fc"/><stop offset="1" stop-color="#3c7ce4"/></linearGradient>
<linearGradient id="sky" x1="0" x2="1"><stop offset="0" stop-color="#ffe858"/><stop offset="1" stop-color="#f0a810"/></linearGradient></defs>
<path d="M6 13.8Q5.8 7.4 10.6 7.4Q16.2 7.4 16 13.8Q11 15 6 13.8Z" fill="url(#sbd)" stroke="#3468cc" stroke-width=".5"/>
<path d="M9.2 7.6L10.6 9.4L12 7.6Z" fill="#fff"/><path d="M10.1 8.6H11.1L11.5 12.6L10.6 13.6L9.7 12.6Z" fill="#e01c1c"/>
<circle cx="10.6" cy="4.2" r="3.2" fill="#f8dcaa" stroke="#d48a3c" stroke-width=".6"/>
<path d="M3.2 6V14.2L4.2 15.4L5.4 14.2V6Z" fill="url(#sky)" stroke="#d0660c" stroke-width=".6"/>
<path d="M3.2 9.4H1.8V10.6H3.2M3.2 11.8H2V13H3.2" fill="#f4c018" stroke="#d0660c" stroke-width=".5"/>
<circle cx="4.1" cy="3.5" r="3" fill="url(#sky)" stroke="#d0660c" stroke-width=".7"/><circle cx="4.1" cy="2.3" r=".8" fill="#a4601c"/></svg></div>
<div class="a tt" style="left:64px;top:99px;height:16px;line-height:16px;letter-spacing:0.314px">Безопасность</div>
<div class="a hl" style="left:34px;top:123px;width:5px"></div>
<div class="a bx" style="left:24px;top:118px"><s></s></div>
<div class="a" style="left:42px;top:115px;width:16px;height:16px"><svg width="16" height="16" viewBox="0 0 16 16" style="display:block;overflow:visible"><defs><linearGradient id="blt" x1="0" y1="0" x2="1" y2="0"><stop offset="0" stop-color="#ffb020"/><stop offset=".5" stop-color="#fff870"/><stop offset="1" stop-color="#ffb020"/></linearGradient></defs>
<path d="M7.5 1 L11.6 1 L9.6 4.4 L11.4 4.4 L9.2 8 L10.8 8 L5.2 15.4 L6.8 9.8 L5 10 L6.6 6.2 L4.8 6.4 Z" fill="url(#blt)" stroke="#e8641c" stroke-width=".7" stroke-linejoin="round"/></svg></div>
<div class="a tt" style="left:64px;top:115px;height:16px;line-height:16px;letter-spacing:0.284px">Транспорты</div>
<div class="a hl" style="left:34px;top:139px;width:5px"></div>
<div class="a bx" style="left:24px;top:134px"><s></s></div>
<div class="a" style="left:42px;top:131px;width:16px;height:16px"><svg width="16" height="16" viewBox="0 0 16 16" style="display:block;overflow:visible"><defs><linearGradient id="fld" x1="0" y1="0" x2="0" y2="1"><stop offset="0" stop-color="#8cc0fa"/><stop offset=".5" stop-color="#4a90ee"/><stop offset="1" stop-color="#2a6ce0"/></linearGradient>
<linearGradient id="blt2" x1="0" y1="0" x2="0" y2="1"><stop offset="0" stop-color="#ffc830"/><stop offset="1" stop-color="#f88a10"/></linearGradient></defs>
<path d="M0.8 5.6 L0.8 14 L13 14 L13.6 5.6 L6.4 5.6 L5.4 4.4 L1.6 4.4 Z" fill="#3a7ce0" stroke="#2c64c8" stroke-width=".5"/>
<path d="M1.6 14.4 L0.4 6.8 L6 6.8 L7.4 5.8 L14.8 5.8 L13.4 14.4 Z" fill="url(#fld)" stroke="#2f6ad0" stroke-width=".5"/>
<path d="M1.2 7.4L6 7.4L7.6 6.6L11 6.6" stroke="#cfe6ff" stroke-width=".8" fill="none" opacity=".8"/>
<path d="M12.4 1.2 L15.9 1.2 L14.2 4.6 L15.8 4.6 L13.8 7.6 L15.2 7.6 L10.4 13.6 L11.8 9 L10.4 9.2 L11.8 5.8 L10.4 6 Z" fill="url(#blt2)" stroke="#e8741c" stroke-width=".5" stroke-linejoin="round"/></svg></div>
<div class="a tt" style="left:64px;top:131px;height:16px;line-height:16px;letter-spacing:0.242px">Транспортные протоколы</div>
<div class="a hl" style="left:34px;top:155px;width:5px"></div>
<div class="a bx" style="left:24px;top:150px"></div>
<div class="a" style="left:42px;top:147px;width:16px;height:16px"><svg width="16" height="16" viewBox="0 0 16 16" style="display:block;overflow:visible"><rect x="2.2" y="1.2" width="13.2" height="14.6" rx="1" fill="#6c7a84" opacity=".45"/>
<rect x="1.7" y=".7" width="13" height="14.6" rx=".8" fill="#f5f5f5" stroke="#a2a2a2" stroke-width=".9"/>
<path d="M2.4 9.3 L4.5 8 L5.3 6.4 L7 8 L8.4 10.6 L10.3 4.8 L12.2 8 L13.6 9.6" fill="none" stroke="#ee5c5c" stroke-width="1" stroke-linejoin="round"/></svg></div>
<div class="a tt" style="left:64px;top:147px;height:16px;line-height:16px;letter-spacing:0.221px">Сбор данных</div>
<div class="a hl f" style="left:54px;top:170px;width:5px"></div>
<div class="a bx" style="left:44px;top:165px"></div>
<div class="a tt it" style="left:62px;top:163px;height:14px;line-height:14px;letter-spacing:0.291px">Модуль:</div>
<div class="a hl" style="left:70px;top:185px;width:8px"></div>
<div class="a" style="left:82px;top:177px;width:16px;height:16px"><svg width="16" height="16" viewBox="0 0 16 16" style="display:block;overflow:visible"><rect x="3.4" y=".8" width="9.4" height="14.6" rx=".6" fill="#d6d6d6" stroke="#7c7c7c" stroke-width=".7"/>
<rect x="4.4" y="1.8" width="7.4" height="1.8" fill="#98a398" stroke="#6a746a" stroke-width=".3"/>
<g fill="#2e2e2e"><rect x="4.6" y="4.6" width="1.5" height="1.7"/><rect x="6.9" y="4.6" width="1.5" height="1.7"/><rect x="9.2" y="4.6" width="1.5" height="1.7"/><rect x="11.5" y="4.6" width="1.5" height="1.7"/><rect x="4.6" y="7.2" width="1.5" height="1.7"/><rect x="6.9" y="7.2" width="1.5" height="1.7"/><rect x="9.2" y="7.2" width="1.5" height="1.7"/><rect x="11.5" y="7.2" width="1.5" height="1.7"/><rect x="4.6" y="9.8" width="1.5" height="1.7"/><rect x="6.9" y="9.8" width="1.5" height="1.7"/><rect x="9.2" y="9.8" width="1.5" height="1.7"/><rect x="11.5" y="9.8" width="1.5" height="1.7"/><rect x="4.6" y="12.4" width="1.5" height="1.7"/><rect x="6.9" y="12.4" width="1.5" height="1.7"/><rect x="9.2" y="12.4" width="1.5" height="1.7"/><rect x="11.5" y="12.4" width="1.5" height="1.7"/></g></svg></div>
<div class="a tt" style="left:104px;top:177px;height:16px;line-height:16px;letter-spacing:0.129px">Блочный вычислитель</div>
<div class="a hl" style="left:70px;top:201px;width:8px"></div>
<div class="a" style="left:82px;top:193px;width:16px;height:16px"><svg width="16" height="16" viewBox="0 0 16 16" style="display:block;overflow:visible"><rect x="2.6" y=".8" width="11" height="7.6" fill="#2f9a44" stroke="#5860a4" stroke-width="1"/>
<path d="M4 2.6H8M4 4.4H7M9.4 2.4H12V5H9.4Z M4 6.4H6" stroke="#9ce494" stroke-width=".8" fill="none"/>
<ellipse cx="10.6" cy="11" rx="3.6" ry="4.6" fill="#111"/>
<ellipse cx="10.6" cy="12" rx="2.1" ry="3.2" fill="#fff"/>
<circle cx="10.6" cy="7.4" r="2.1" fill="#111"/>
<path d="M9.8 8.2L10.6 9.2L11.6 8.2Z" fill="#f0b020"/><circle cx="9.9" cy="7" r=".5" fill="#fff"/><circle cx="11.3" cy="7" r=".5" fill="#fff"/>
<path d="M6.6 15.6Q8 13.8 9.6 15.6ZM11.6 15.6Q13.2 13.8 14.8 15.6Z" fill="#f0b020"/>
<path d="M0.8 12.6L7.4 7.4L8.6 9L2 14.4Z" fill="#2a6a34" stroke="#163a1c" stroke-width=".4"/><path d="M2 12.6L7.4 8.4" stroke="#c8c040" stroke-width=".6"/></svg></div>
<div class="a tt" style="left:104px;top:193px;height:16px;line-height:16px;letter-spacing:0.133px">DAQ платы от Comedi</div>
<div class="a hl" style="left:74px;top:217px;width:5px"></div>
<div class="a bx" style="left:64px;top:212px"><s></s></div>
<div class="a" style="left:82px;top:209px;width:16px;height:16px"><svg width="16" height="16" viewBox="0 0 16 16" style="display:block;overflow:visible"><path d="M4.6 10.6Q5.4 14.4 9.6 14.4Q13.8 14.4 14.8 10.6Z" fill="#2f55c4" stroke="#1f3a94" stroke-width=".4"/>
<path d="M6.4 12.6Q9.6 14 13 12.4" stroke="#9cc4f0" stroke-width=".6" fill="none"/>
<rect x=".4" y=".2" width="15.4" height="5.2" fill="none" stroke="#f29cb0" stroke-width=".5" stroke-dasharray="1 1"/>
<rect x="4.4" y=".4" width="7.6" height="6.8" fill="#dce878" stroke="#9cb44c" stroke-width=".4"/>
<rect x="4.6" y=".6" width="7.2" height="2.2" fill="#34dc34"/>
<path d="M5.4 4.2H11M5.4 5.8H11" stroke="#a8c050" stroke-width=".8"/>
<rect x=".2" y="7.3" width="15.8" height="3.7" fill="#dde024" stroke="#b0b418" stroke-width=".3"/>
<path d="M1.6 9.2H4M5 9.2H7.6M8.8 9.2H10.6M11.6 9.2H14.6" stroke="#6c7414" stroke-width="1.1"/></svg></div>
<div class="a tt" style="left:104px;top:209px;height:16px;line-height:16px;letter-spacing:0.238px">Data sources gate</div>
<div class="a hl" style="left:70px;top:233px;width:8px"></div>
<div class="a" style="left:82px;top:225px;width:16px;height:16px"><svg width="16" height="16" viewBox="0 0 16 16" style="display:block;overflow:visible"><path d="M2.2 5.2H14M2.2 6.4H4M5 6.4H7.4M8.4 6.4H10.6M11.6 6.4H14" stroke="#a8a8a8" stroke-width=".8"/>
<path d="M2.4 8V11H3.6Q4.8 11 4.8 9.5Q4.8 8 3.6 8ZM8 8.4Q7.4 7.8 6.6 8Q5.6 8.4 5.8 9.8Q6 11.2 7.2 11Q7.8 10.9 8 10.4M9.2 9.5A1.1 1.5 0 1 0 11.4 9.5A1.1 1.5 0 1 0 9.2 9.5M12.4 11V8L14.2 11V8" fill="none" stroke="#8c8c8c" stroke-width=".8"/></svg></div>
<div class="a tt" style="left:104px;top:225px;height:16px;line-height:16px;letter-spacing:0.254px">DCON клиент</div>
<div class="a hl" style="left:70px;top:249px;width:8px"></div>
<div class="a" style="left:82px;top:241px;width:16px;height:16px"><svg width="16" height="16" viewBox="0 0 16 16" style="display:block;overflow:visible"><path d="M5 3.2l3 -1.5l3 1.5l-3 1.5Z" fill="#e4d6b4"/><path d="M5 3.2v3.2l3 1.5v-3.2Z" fill="#4a7a48"/><path d="M11 3.2v3.2l-3 1.5v-3.2Z" fill="#2c5a30"/><path d="M2 6.6l3 -1.5l3 1.5l-3 1.5Z" fill="#e4d6b4"/><path d="M2 6.6v3.2l3 1.5v-3.2Z" fill="#4a7a48"/><path d="M8 6.6v3.2l-3 1.5v-3.2Z" fill="#2c5a30"/><path d="M8 6.6l3 -1.5l3 1.5l-3 1.5Z" fill="#e4d6b4"/><path d="M8 6.6v3.2l3 1.5v-3.2Z" fill="#4a7a48"/><path d="M14 6.6v3.2l-3 1.5v-3.2Z" fill="#2c5a30"/><path d="M5 10l3 -1.5l3 1.5l-3 1.5Z" fill="#e4d6b4"/><path d="M5 10v3.2l3 1.5v-3.2Z" fill="#4a7a48"/><path d="M11 10v3.2l-3 1.5v-3.2Z" fill="#2c5a30"/></svg></div>
<div class="a tt" style="left:104px;top:241px;height:16px;line-height:16px;letter-spacing:0.141px">Diamond DAQ платы</div>
<div class="a hl" style="left:74px;top:265px;width:5px"></div>
<div class="a bx" style="left:64px;top:260px"></div>
<div class="a" style="left:82px;top:257px;width:16px;height:16px"><svg width="16" height="16" viewBox="0 0 16 16" style="display:block;overflow:visible"><ellipse cx="8" cy="8.4" rx="8" ry="4.6" fill="none" stroke="#f2b820" stroke-width="1.6" transform="rotate(-24 8 8.4)"/>
<path d="M10 13.6Q14.6 12 15.6 8" stroke="#f6d040" stroke-width="1.2" fill="none"/>
<g font-family="Liberation Sans, sans-serif" font-weight="bold" font-style="italic" fill="#e01818" stroke="#e01818" stroke-width=".3">
<text x="1" y="7.6" font-size="6.6" transform="rotate(-14 1 7.6)">ICP</text>
<text x="3.4" y="14.6" font-size="6.6" transform="rotate(-14 3.4 14.6)">DAS</text></g></svg></div>
<div class="a tt" style="left:104px;top:257px;height:16px;line-height:16px;letter-spacing:0.003px">Оборудование ICP DAS</div>
<div class="a hl f" style="left:94px;top:280px;width:5px"></div>
<div class="a bx" style="left:84px;top:275px"></div>
<div class="a tt" style="left:102px;top:273px;height:14px;line-height:14px;letter-spacing:0.1px">LP-8781</div>
<div class="a hl f" style="left:110px;top:294px;width:8px"></div>
<div class="a tt" style="left:123px;top:287px;height:14px;line-height:14px;letter-spacing:-0.3px">cpu</div>
<div class="a" style="left:29px;top:301px;width:1px;height:14px;background:#4c7991"></div><div class="a vl w f" style="left:29px;top:301px;height:14px"></div>
<div class="a" style="left:49px;top:301px;width:1px;height:14px;background:#4c7991"></div><div class="a vl w f" style="left:49px;top:301px;height:14px"></div>
<div class="a" style="left:69px;top:301px;width:1px;height:14px;background:#4c7991"></div><div class="a vl w f" style="left:69px;top:301px;height:14px"></div>
<div class="a" style="left:109px;top:301px;width:1px;height:14px;background:#4c7991"></div><div class="a vl w f" style="left:109px;top:301px;height:14px"></div>
<div class="a" style="left:110px;top:308px;width:8px;height:1px;background:#4c7991"></div><div class="a hl w f" style="left:110px;top:308px;width:8px"></div>
<div class="a" style="left:119px;top:301px;width:119px;height:14px;border:1px dotted #c9905e;border-right:none"></div>
<div class="a hl f" style="left:110px;top:308px;width:8px"></div>
<div class="a tt ws" style="left:123px;top:301px;height:14px;line-height:14px;letter-spacing:0.1px">slot2</div>
<div class="a hl f" style="left:110px;top:322px;width:8px"></div>
<div class="a tt" style="left:123px;top:315px;height:14px;line-height:14px;letter-spacing:0.1px">slot3</div>
<div class="a hl f" style="left:110px;top:336px;width:8px"></div>
<div class="a tt" style="left:123px;top:329px;height:14px;line-height:14px;letter-spacing:0.1px">slot4</div>
<div class="a hl f" style="left:110px;top:350px;width:8px"></div>
<div class="a tt" style="left:123px;top:343px;height:14px;line-height:14px;letter-spacing:0.1px">slot5</div>
</div>
<div class="a" style="left:248px;top:96px;width:16px;height:359px;background:#9eb9c6"></div><div class="a sb" style="left:248px;top:306px;width:16px;height:118px"></div>
<div class="a sbtn" style="left:248px;top:95px;width:16px;height:16px"><span class="arr au" style="left:3px;top:4px"></span></div>
<div class="a sl slv" style="left:248px;top:111px;width:16px;height:196px"></div>
<i class="a gd" style="left:252px;top:199px"></i><i class="a gd" style="left:256px;top:199px"></i><i class="a gd" style="left:260px;top:199px"></i><i class="a gd" style="left:252px;top:203px"></i><i class="a gd" style="left:256px;top:203px"></i><i class="a gd" style="left:260px;top:203px"></i><i class="a gd" style="left:252px;top:207px"></i><i class="a gd" style="left:256px;top:207px"></i><i class="a gd" style="left:260px;top:207px"></i><i class="a gd" style="left:252px;top:211px"></i><i class="a gd" style="left:256px;top:211px"></i><i class="a gd" style="left:260px;top:211px"></i><i class="a gd" style="left:252px;top:215px"></i><i class="a gd" style="left:256px;top:215px"></i><i class="a gd" style="left:260px;top:215px"></i>
<div class="a sbtn" style="left:248px;top:423px;width:16px;height:16px"><span class="arr au" style="left:3px;top:4px"></span></div>
<div class="a sbtn" style="left:248px;top:439px;width:16px;height:16px"><span class="arr ad" style="left:3px;top:4px"></span></div>
<div class="a" style="left:10px;top:455px;width:238px;height:16px;background:#9eb9c6"></div><div class="a sb" style="left:110px;top:455px;width:107px;height:16px"></div>
<div class="a sbtn" style="left:9px;top:455px;width:16px;height:16px"><span class="arr al" style="left:4px;top:3px"></span></div>
<div class="a sl slh" style="left:25px;top:455px;width:86px;height:16px"></div>
<i class="a gd" style="left:59px;top:458px"></i><i class="a gd" style="left:63px;top:458px"></i><i class="a gd" style="left:67px;top:458px"></i><i class="a gd" style="left:71px;top:458px"></i><i class="a gd" style="left:75px;top:458px"></i><i class="a gd" style="left:59px;top:462px"></i><i class="a gd" style="left:63px;top:462px"></i><i class="a gd" style="left:67px;top:462px"></i><i class="a gd" style="left:71px;top:462px"></i><i class="a gd" style="left:75px;top:462px"></i><i class="a gd" style="left:59px;top:466px"></i><i class="a gd" style="left:63px;top:466px"></i><i class="a gd" style="left:67px;top:466px"></i><i class="a gd" style="left:71px;top:466px"></i><i class="a gd" style="left:75px;top:466px"></i>
<div class="a sbtn" style="left:217px;top:455px;width:15px;height:16px"><span class="arr al" style="left:3px;top:3px"></span></div>
<div class="a sbtn" style="left:232px;top:455px;width:16px;height:16px"><span class="arr ar" style="left:4px;top:3px"></span></div>
<div class="a" style="left:248px;top:455px;width:17px;height:16px;background:#9eb9c6"></div>
<i class="a gd2" style="left:269px;top:230px"></i><i class="a gd2" style="left:269px;top:234px"></i><i class="a gd2" style="left:269px;top:238px"></i><i class="a gd2" style="left:269px;top:242px"></i><i class="a gd2" style="left:269px;top:246px"></i><i class="a gd2" style="left:269px;top:250px"></i><i class="a gd2" style="left:269px;top:254px"></i><i class="a gd2" style="left:269px;top:258px"></i><i class="a gd2" style="left:269px;top:262px"></i><i class="a gd2" style="left:269px;top:266px"></i><i class="a gd2" style="left:269px;top:270px"></i><i class="a gd2" style="left:269px;top:274px"></i><i class="a gd2" style="left:269px;top:278px"></i><i class="a gd2" style="left:269px;top:282px"></i><i class="a gd2" style="left:269px;top:286px"></i><i class="a gd2" style="left:269px;top:290px"></i><i class="a gd2" style="left:269px;top:294px"></i><i class="a gd2" style="left:269px;top:298px"></i><i class="a gd2" style="left:269px;top:302px"></i><i class="a gd2" style="left:269px;top:306px"></i><i class="a gd2" style="left:269px;top:310px"></i><i class="a gd2" style="left:269px;top:314px"></i><i class="a gd2" style="left:269px;top:318px"></i><i class="a gd2" style="left:269px;top:322px"></i><i class="a gd2" style="left:269px;top:326px"></i><i class="a gd2" style="left:269px;top:330px"></i><i class="a gd2" style="left:269px;top:334px"></i><i class="a gd2" style="left:269px;top:338px"></i><i class="a gd2" style="left:269px;top:342px"></i><i class="a gd2" style="left:269px;top:346px"></i><i class="a gd2" style="left:269px;top:350px"></i><i class="a gd2" style="left:269px;top:354px"></i>
<div id="ledit" class="a"></div>

<div id="panel" class="a"></div>
<div id="ptitle" class="a">Параметр: slot2</div>
<div class="a tab" style="left:284px;width:82px;border-radius:4px 0 0 0;letter-spacing:.35px;text-align:left;padding-left:10px">Параметр</div>
<div class="a tab" style="left:365px;width:77px;border-radius:0;letter-spacing:-.15px;text-align:left;padding-left:11px">Атрибуты</div>
<div class="a tab" style="left:441px;width:86px;border-radius:0;letter-spacing:-.02px;text-align:left;padding-left:11px">Архивация</div>
<div id="pane" class="a"></div>
<div class="a tab" style="left:526px;width:103px;top:137px;height:22px;background:#9eb9c6;padding-top:3px;letter-spacing:.08px">Конфигурация</div>
<div class="a" id="vp" style="left:287px;top:160px;width:384px;height:326px;overflow:hidden"><div class="a" style="left:-287px;top:-160px">
<div class="a lbl" style="top:173px">Тип входа 0:</div>
<div class="a cb" style="left:370px;top:170px">-10В до 10В<i></i><b></b></div>
<div class="a lbl" style="top:196px">Тип входа 1:</div>
<div class="a cb" style="left:370px;top:193px">-10В до 10В<i></i><b></b></div>
<div class="a lbl" style="top:219px">Тип входа 2:</div>
<div class="a cb" style="left:370px;top:216px">-10В до 10В<i></i><b></b></div>
<div class="a lbl" style="top:242px">Тип входа 3:</div>
<div class="a cb" style="left:370px;top:239px">-10В до 10В<i></i><b></b></div>
<div class="a lbl" style="top:265px">Тип входа 4:</div>
<div class="a cb" style="left:370px;top:262px">-10В до 10В<i></i><b></b></div>
<div class="a lbl" style="top:288px">Тип входа 5:</div>
<div class="a cb" style="left:370px;top:285px">-10В до 10В<i></i><b></b></div>
<div class="a lbl" style="top:311px">Тип входа 6:</div>
<div class="a cb" style="left:370px;top:308px">-10В до 10В<i></i><b></b></div>
<div class="a lbl" style="top:334px">Тип входа 7:</div>
<div class="a cb" style="left:370px;top:331px">-10В до 10В<i></i><b></b></div>
<div class="a lbl" style="top:357px">Тип входа 8:</div>
<div class="a cb" style="left:370px;top:354px">-10В до 10В<i></i><b></b></div>
<div class="a lbl" style="top:380px">Тип входа 9:</div>
<div class="a cb" style="left:370px;top:377px">-10В до 10В<i></i><b></b></div>
<div class="a lbl" style="top:403px">Тип входа 10:</div>
<div class="a cb" style="left:377px;top:400px">Ошибка<i></i><b></b></div>
<div class="a lbl" style="top:426px">Тип входа 11:</div>
<div class="a cb" style="left:377px;top:423px">Ошибка<i></i><b></b></div>
<div class="a lbl" style="top:449px">Тип входа 12:</div>
<div class="a cb" style="left:377px;top:446px">Ошибка<i></i><b></b></div>
<div class="a lbl" style="top:472px">Тип входа 13:</div>
<div class="a cb" style="left:377px;top:469px">Ошибка<i></i><b></b></div>
</div></div>

<div class="a" style="left:286px;top:159px;width:403px;height:328px;border:1px solid #5e7c8a;border-radius:3px"></div>
<div class="a sb" style="left:671px;top:364px;width:16px;height:90px"></div>
<div class="a sbtn" style="left:671px;top:161px;width:16px;height:16px"><span class="arr au" style="left:3px;top:4px"></span></div>
<div class="a sl slv" style="left:671px;top:177px;width:16px;height:188px"></div>
<i class="a gd" style="left:674px;top:262px"></i><i class="a gd" style="left:678px;top:262px"></i><i class="a gd" style="left:682px;top:262px"></i><i class="a gd" style="left:674px;top:266px"></i><i class="a gd" style="left:678px;top:266px"></i><i class="a gd" style="left:682px;top:266px"></i><i class="a gd" style="left:674px;top:270px"></i><i class="a gd" style="left:678px;top:270px"></i><i class="a gd" style="left:682px;top:270px"></i><i class="a gd" style="left:674px;top:274px"></i><i class="a gd" style="left:678px;top:274px"></i><i class="a gd" style="left:682px;top:274px"></i><i class="a gd" style="left:674px;top:278px"></i><i class="a gd" style="left:678px;top:278px"></i><i class="a gd" style="left:682px;top:278px"></i>
<div class="a sbtn" style="left:671px;top:453px;width:16px;height:16px"><span class="arr au" style="left:3px;top:4px"></span></div>
<div class="a sbtn" style="left:671px;top:469px;width:16px;height:16px"><span class="arr ad" style="left:3px;top:4px"></span></div>
<div class="a st" style="left:609px;width:20px"></div>
<div class="a" style="left:612px;top:507px;width:14px;height:16px;background:#efefef;border-top:1px solid #fff;border-left:1px solid #fff;border-right:1px solid #1a1a1a;border-bottom:1px solid #1a1a1a;box-shadow:inset -1px -1px 0 #8a8a8a"><span class="arr ad" style="left:2px;top:5px;border-width:4px 3.5px 0 3.5px"></span></div>
<div class="a st" style="left:631px;width:10px"><span class="a" style="left:1px;top:1px;font-size:14px;color:#0a0a2a">*</span></div>
<div class="a st" style="left:643px;width:40px"><span class="a" style="left:1px;top:1px;font-size:13px;color:#1a961a;-webkit-text-stroke:.2px #1a961a;letter-spacing:-.35px">roman</span></div>
<svg class="a" style="left:691px;top:511px" width="14" height="14" viewBox="0 0 14 14"><path d="M13.5 1.5L1.5 13.5M13.5 5.5L5.5 13.5M13.5 9.5L9.5 13.5" stroke="#d4e4ec" stroke-width="1.2"/><path d="M13.5 2.8L2.8 13.5M13.5 6.8L6.8 13.5M13.5 10.8L10.8 13.5" stroke="#7d99a7" stroke-width=".9"/></svg>

</div>
</body></html>
